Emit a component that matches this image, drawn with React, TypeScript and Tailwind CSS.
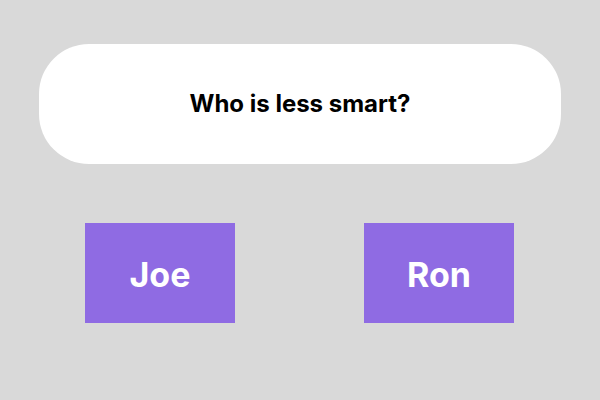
export default function App() {
  const options = ["Joe", "Ron"];

  return (
    <div
      className="w-[600px] h-[400px] bg-[#d9d9d9] flex flex-col items-center pt-[44px]"
      style={{ fontFamily: "Inter, 'Liberation Sans', sans-serif" }}
    >
      <div className="w-[522px] h-[120px] bg-white rounded-[50px] flex items-center justify-center">
        <h1 className="text-[24px] font-bold text-black">Who is less smart?</h1>
      </div>

      <div className="mt-[59px] pr-[1px] flex gap-[129px]">
        {options.map((name) => (
          <button
            key={name}
            className="w-[150px] h-[100px] bg-[#8f6be3] text-white text-[34px] font-bold flex items-center justify-center pt-[2px]"
          >
            {name}
          </button>
        ))}
      </div>
    </div>
  );
}
